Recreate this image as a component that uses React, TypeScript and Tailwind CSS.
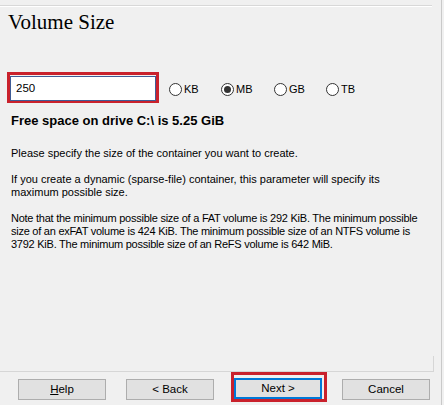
import React, { useState } from 'react';

const units = ['KB', 'MB', 'GB', 'TB'];
const unitWidths = ['w-[52px]', 'w-[53px]', 'w-[52px]', 'w-[52px]'];

const Radio: React.FC<{ label: string; checked: boolean; onClick: () => void; className: string }> = ({ label, checked, onClick, className }) => (
  <div onClick={onClick} className={`flex items-center cursor-default ${className}`}>
    <span className="w-[13px] h-[13px] rounded-full border border-[#333333] bg-white flex items-center justify-center">
      {checked && <span className="w-[7px] h-[7px] rounded-full bg-[#333333]" />}
    </span>
    <span className="ml-[2px] text-[11px] leading-[13px]">{label}</span>
  </div>
);

const WinButton: React.FC<{ children: React.ReactNode; focused?: boolean }> = ({ children, focused }) => (
  <button
    type="button"
    className={`w-[88px] h-[21px] text-[11.5px] leading-[13px] text-black bg-[#e1e1e1] ${focused ? 'border-2 border-[#0078d7]' : 'border border-[#adadad]'}`}
  >
    {children}
  </button>
);

const App: React.FC = () => {
  const [size, setSize] = useState('250');
  const [unit, setUnit] = useState('MB');

  return (
    <div className="w-[444px] h-[405px] overflow-hidden bg-[#f0f0f0] text-black font-['Liberation_Sans',Arial,sans-serif]">
      <div className="w-[442px] h-[405px] border-r border-[#c9c9c9] flex flex-col">
        <div className="mt-[5px] w-[432px] h-[2px] border-t border-[#d8d8d8] border-b border-b-white" />

        <h1 className="mt-[4px] pl-[8px] text-[21px] leading-[22px] font-['Liberation_Serif','Times_New_Roman',serif]">Volume Size</h1>

        <div className="mt-[39px] flex items-start">
          <div className="ml-[7px] w-[152px] h-[31px] border-[3px] border-[#c9212c]">
            <input
              value={size}
              onChange={e => setSize(e.target.value)}
              className="w-full h-full border border-[#3f5c96] bg-white px-[5px] text-[11.5px] outline-none"
            />
          </div>
          <div className="ml-[10px] mt-[11px] flex">
            {units.map((u, i) => (
              <Radio key={u} label={u} checked={unit === u} onClick={() => setUnit(u)} className={unitWidths[i]} />
            ))}
          </div>
        </div>

        <p className="mt-[10px] pl-[11px] text-[13px] leading-[16px] font-bold">Free space on drive C:\ is 5.25 GiB</p>

        <div className="pl-[11px] text-[11px] leading-[13px] whitespace-nowrap">
          <p className="mt-[18px]">Please specify the size of the container you want to create.</p>
          <p className="mt-[13px]">
            If you create a dynamic (sparse-file) container, this parameter will specify its<br />
            maximum possible size.
          </p>
          <p className="mt-[13px] tracking-[-0.25px]">
            Note that the minimum possible size of a FAT volume is 292 KiB. The minimum possible<br />
            size of an exFAT volume is 424 KiB. The minimum possible size of an NTFS volume is<br />
            3792 KiB. The minimum possible size of an ReFS volume is 642 MiB.
          </p>
        </div>

        <div className="flex-1" />
        <div className="w-[434px] h-[16px] border-b border-r border-[#d6d6d6]" />

        <div className="h-[33px] flex items-start pl-[18px]">
          <div className="mt-[4px]">
            <WinButton><span className="underline">H</span>elp</WinButton>
          </div>
          <div className="mt-[4px] ml-[20px]">
            <WinButton>&lt; Back</WinButton>
          </div>
          <div className="ml-[17px] border-[3px] border-[#c9212c] pr-[2px]">
            <WinButton focused>Next &gt;</WinButton>
          </div>
          <div className="mt-[4px] ml-[15px]">
            <WinButton>Cancel</WinButton>
          </div>
        </div>
      </div>
    </div>
  );
};

export default App;
